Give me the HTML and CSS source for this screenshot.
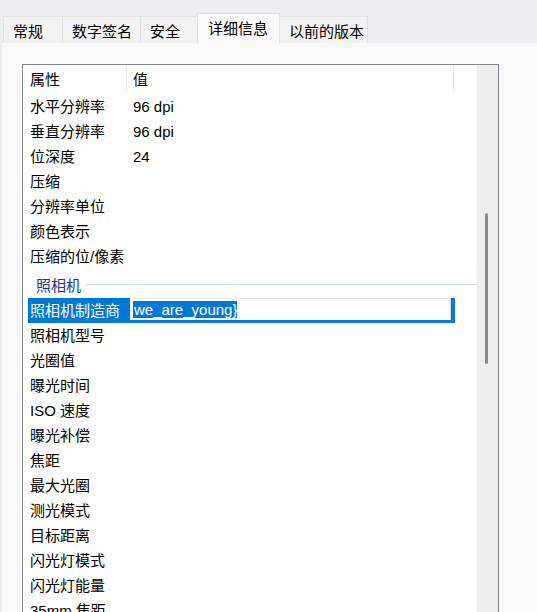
FILE: index.html
```html
<!DOCTYPE html>
<html lang="zh-CN">
<head>
  <meta charset="UTF-8" />
  <title>属性 - 详细信息</title>
  <link rel="stylesheet" href="styles.css">
</head>
<body>
  <div class="tabs">
    <div class="tab">常规</div>
    <div class="tab">数字签名</div>
    <div class="tab">安全</div>
    <div class="tab active">详细信息</div>
    <div class="tab">以前的版本</div>
  </div>

  <div class="panel">
    <div class="listbox">
      <div class="list">
        <div class="head">
          <div class="col name">属性</div>
          <div class="col value">值</div>
        </div>

        <div class="row"><div class="name">水平分辨率</div><div class="value">96 dpi</div></div>
        <div class="row"><div class="name">垂直分辨率</div><div class="value">96 dpi</div></div>
        <div class="row"><div class="name">位深度</div><div class="value">24</div></div>
        <div class="row"><div class="name">压缩</div><div class="value"></div></div>
        <div class="row"><div class="name">分辨率单位</div><div class="value"></div></div>
        <div class="row"><div class="name">颜色表示</div><div class="value"></div></div>
        <div class="row"><div class="name">压缩的位/像素</div><div class="value"></div></div>

        <div class="group"><span>照相机</span></div>

        <div class="row selected">
          <div class="name">照相机制造商</div>
          <div class="edit"><span class="sel">we_are_young}</span></div>
        </div>
        <div class="row"><div class="name">照相机型号</div><div class="value"></div></div>
        <div class="row"><div class="name">光圈值</div><div class="value"></div></div>
        <div class="row"><div class="name">曝光时间</div><div class="value"></div></div>
        <div class="row"><div class="name">ISO 速度</div><div class="value"></div></div>
        <div class="row"><div class="name">曝光补偿</div><div class="value"></div></div>
        <div class="row"><div class="name">焦距</div><div class="value"></div></div>
        <div class="row"><div class="name">最大光圈</div><div class="value"></div></div>
        <div class="row"><div class="name">测光模式</div><div class="value"></div></div>
        <div class="row"><div class="name">目标距离</div><div class="value"></div></div>
        <div class="row"><div class="name">闪光灯模式</div><div class="value"></div></div>
        <div class="row"><div class="name">闪光灯能量</div><div class="value"></div></div>
        <div class="row"><div class="name">35mm 焦距</div><div class="value"></div></div>
      </div>
      <div class="scrollbar"><div class="thumb"></div></div>
    </div>
  </div>
</body>
</html>
```

FILE: styles.css
```css
body {
  margin: 0;
  height: 612px;
  overflow: hidden;
  background-color: #eff0f3;
  font-family: "Liberation Sans", "Noto Sans CJK SC", sans-serif;
  font-size: 15px;
  color: #000000;
}
.tabs {
  display: flex;
  align-items: flex-end;
  height: 43px;
  padding-left: 3px;
  box-sizing: border-box;
}
.tab {
  height: 27px;
  line-height: 29px;
  padding-left: 9px;
  white-space: nowrap;
  background-color: #f3f3f3;
  border: 1px solid #e3e3e3;
  border-bottom: none;
  margin-right: -1px;
  box-sizing: border-box;
}
.tab:nth-child(1) { width: 60px; }
.tab:nth-child(2) { width: 79px; }
.tab:nth-child(3) { width: 58px; }
.tab:nth-child(5) { width: 89px; }
.tab.active {
  width: 83px;
  height: 31px;
  line-height: 29px;
  padding-left: 10px;
  background-color: #f9f9f9;
  position: relative;
  z-index: 1;
  margin-bottom: -1px;
}
.panel {
  background-color: #f9f9f9;
  border-left: 1px solid #ececec;
  margin-left: 1px;
  height: 569px;
  padding: 21px 0 0 20px;
  box-sizing: border-box;
}
.listbox {
  display: flex;
  width: 477px;
  height: 560px;
  border: 1px solid #7f868d;
  border-bottom: none;
  background-color: #ffffff;
  box-sizing: border-box;
}
.list {
  width: 454px;
}
.head {
  display: flex;
  height: 29px;
  padding-top: 1px;
  box-sizing: border-box;
}
.head .col {
  height: 25px;
  line-height: 27px;
  border-right: 1px solid #e5e5e5;
  box-sizing: border-box;
}
.name {
  width: 104px;
  padding-left: 7px;
  box-sizing: border-box;
  white-space: nowrap;
}
.value {
  width: 327px;
  padding-left: 6px;
  box-sizing: border-box;
}
.row {
  display: flex;
  height: 25px;
  line-height: 25px;
}
.group {
  display: flex;
  align-items: center;
  height: 29px;
  padding-top: 2px;
  padding-left: 13px;
  margin-right: -12px;
  box-sizing: border-box;
  color: #1e3596;
}
.group span {
  padding-right: 4px;
}
.group::after {
  content: "";
  flex: 1;
  height: 1px;
  background-color: #d8e1ef;
}
.row.selected {
  margin-left: 5px;
  width: 427px;
  background-color: #0078d7;
  color: #ffffff;
}
.row.selected .name {
  width: 102px;
  padding-left: 2px;
}
.edit {
  width: 321px;
  height: 22px;
  background-color: #ffffff;
  border-top: 1px solid #e8e8e8;
  border-right: 2px solid #e4e4e4;
  border-left: 3px solid #ffffff;
  box-sizing: border-box;
  line-height: 21px;
}
.sel {
  background-color: #0078d7;
  color: #ffffff;
  padding-left: 1px;
}
.scrollbar {
  width: 21px;
  background-color: #eeeeee;
  position: relative;
}
.thumb {
  position: absolute;
  left: 8px;
  top: 148px;
  width: 3px;
  height: 151px;
  border-radius: 2px;
  background-color: #8a8a8a;
}
```
